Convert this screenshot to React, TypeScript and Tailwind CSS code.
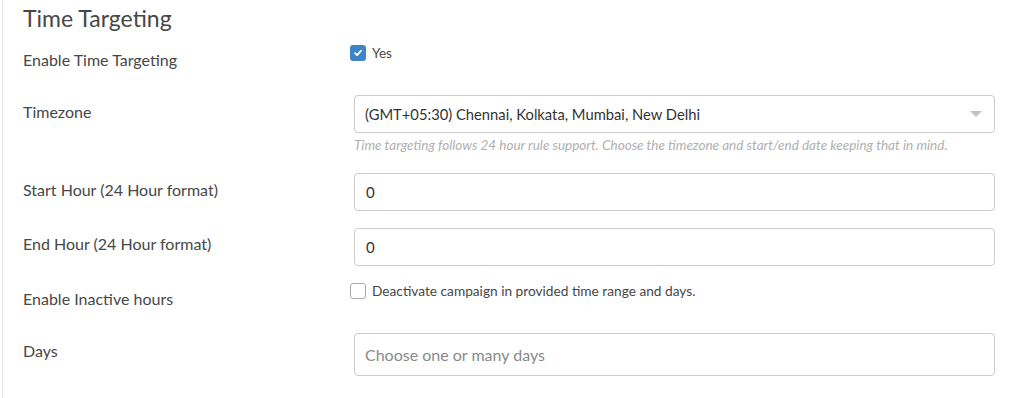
import React from "react";

const font = { fontFamily: "Lato, 'Noto Sans', sans-serif" };

export default function App() {
  return (
    <div className="w-[1024px] h-[398px] bg-white overflow-hidden" style={font}>
      <div className="ml-[2px] h-full border-l border-[#e6e6ea] pl-[20px] pr-[29px] text-[#474747]">
        <h2 className="text-[23px] leading-[36px] text-[#474747]">Time Targeting</h2>

        {/* Enable time targeting */}
        <div className="mt-[8px] flex items-start">
          <div className="w-[327px] pt-[6px] text-[16px] leading-[20px]">Enable Time Targeting</div>
          <label className="mt-[1px] flex items-center gap-[6px]">
            <span className="flex h-[16px] w-[16px] items-center justify-center rounded-[3px] bg-[#3d85c6]">
              <svg width="10" height="10" viewBox="0 0 10 10">
                <path d="M2 5.2 L4.1 7.2 L8 2.8" fill="none" stroke="white" strokeWidth="1.8" strokeLinecap="round" strokeLinejoin="round" />
              </svg>
            </span>
            <span className="text-[13.5px] leading-[16px]">Yes</span>
          </label>
        </div>

        {/* Timezone */}
        <div className="mt-[25px] flex items-start">
          <div className="w-[331px] pt-[7px] text-[16px] leading-[20px]">Timezone</div>
          <div className="flex-1">
            <div className="flex h-[38px] items-center justify-between rounded-[4px] border border-[#cccccc] pl-[10px] pr-[12px]">
              <span className="text-[14.75px] text-[#333]">(GMT+05:30) Chennai, Kolkata, Mumbai, New Delhi</span>
              <svg width="12" height="7" viewBox="0 0 12 7">
                <path d="M0 0 L12 0 L6 6 Z" fill="#c2c2c2" />
              </svg>
            </div>
            <div className="mt-[4px] text-[13.5px] italic leading-[16px] text-[#b0b0b0]">
              Time targeting follows 24 hour rule support. Choose the timezone and start/end date keeping that in mind.
            </div>
          </div>
        </div>

        {/* Start hour */}
        <div className="mt-[20px] flex items-start">
          <div className="w-[331px] pt-[7px] text-[16px] leading-[20px]">Start Hour (24 Hour format)</div>
          <div className="flex h-[38px] flex-1 items-center rounded-[4px] border border-[#cccccc] pl-[11px] text-[15px] text-[#333]">0</div>
        </div>

        {/* End hour */}
        <div className="mt-[17px] flex items-start">
          <div className="w-[331px] pt-[6px] text-[16px] leading-[20px]">End Hour (24 Hour format)</div>
          <div className="flex h-[38px] flex-1 items-center rounded-[4px] border border-[#cccccc] pl-[11px] text-[15px] text-[#333]">0</div>
        </div>

        {/* Inactive hours */}
        <div className="mt-[17px] flex items-start">
          <div className="w-[327px] pt-[6px] text-[16px] leading-[20px]">Enable Inactive hours</div>
          <label className="flex items-center gap-[6px]">
            <span className="h-[16px] w-[16px] rounded-[3px] border border-[#aaaaaa] bg-white" />
            <span className="text-[13.7px] leading-[16px]">Deactivate campaign in provided time range and days.</span>
          </label>
        </div>

        {/* Days */}
        <div className="mt-[24px] flex items-start">
          <div className="w-[331px] pt-[8px] text-[16px] leading-[20px]">Days</div>
          <div className="flex h-[43px] flex-1 items-center rounded-[4px] border border-[#cccccc] pl-[10px] text-[16px] text-[#8a8a8a]">
            Choose one or many days
          </div>
        </div>
      </div>
    </div>
  );
}
